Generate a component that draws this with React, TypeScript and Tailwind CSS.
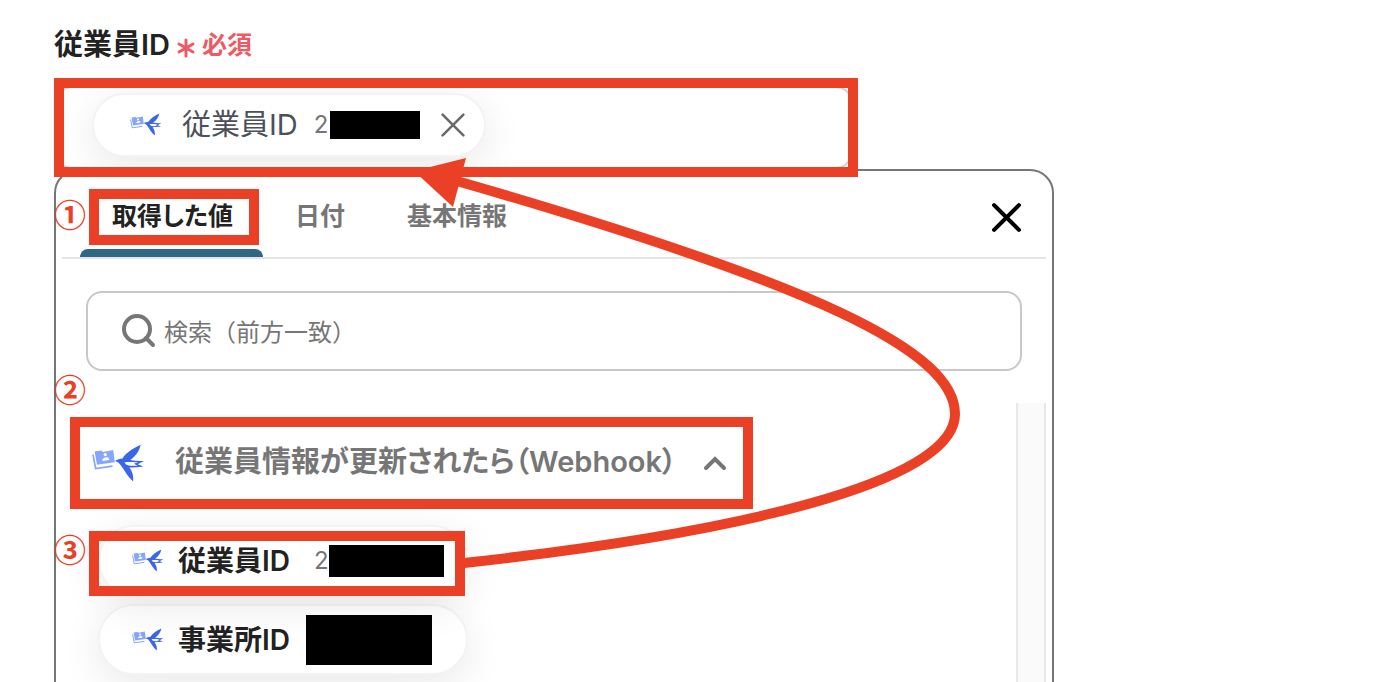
import React, { useState } from 'react'
import clsx from 'clsx'

const TABS = ['取得した値', '日付', '基本情報']

const BirdIcon: React.FC<{ className?: string }> = ({ className }) => (
  <svg viewBox="0 0 160 116" className={className} aria-hidden="true">
    <path d="M3 32 L11 74 L62 67" fill="none" stroke="#85a6fb" strokeWidth="5" />
    <path d="M8 23 L28 20 L33 24 L64 18 L69 55 L15 63 Z" fill="#85a6fb" />
    <circle cx="40" cy="32" r="5" fill="#fff" />
    <path d="M31 49 C31 39 50 36 52 45 L52 48 L32 51 Z" fill="#fff" />
    <path
      d="M147 2 C122 14 102 26 92 44 C83 45 77 47 69 51 C78 54 82 57 85 62 C92 70 96 78 102 87 C108 97 115 105 124 113 C126 98 123 84 113 71 C128 71 140 71 155 68 L138 61 L157 51 C142 52 128 51 115 48 C131 38 143 21 147 2 Z"
      fill="#3a66ea"
    />
    <path d="M98 56 C110 53 124 56 140 55 L126 60 L138 65 C124 66 110 67 102 61 Z" fill="#fff" />
  </svg>
)

const CrossIcon: React.FC<{ className?: string; strokeWidth: number }> = ({ className, strokeWidth }) => (
  <svg viewBox="0 0 30 30" className={className} aria-hidden="true">
    <path
      d="M3 3 L27 27 M27 3 L3 27"
      stroke="currentColor"
      strokeWidth={strokeWidth}
      strokeLinecap="round"
      fill="none"
    />
  </svg>
)

const Frame: React.FC<{ className: string }> = ({ className }) => (
  <span className={clsx('pointer-events-none absolute z-10 border-10 border-[#ea4025]', className)} />
)

const Step: React.FC<{ className: string; children: string }> = ({ className, children }) => (
  <span
    className={clsx(
      "absolute z-10 font-['Noto_Sans_CJK_JP',sans-serif] text-[32px] leading-8 font-bold text-[#ea4025] [font-feature-settings:normal]",
      className,
    )}
  >
    {children}
  </span>
)

export default function App() {
  const [tab, setTab] = useState(TABS[0])
  const [open, setOpen] = useState(true)
  const [keyword, setKeyword] = useState('')

  return (
    <main className="h-screen overflow-hidden bg-white font-['Inter','Noto_Sans_CJK_JP',sans-serif] text-[#222] [font-feature-settings:'palt']">
      <div className="relative ml-[54px] max-w-[1000px] pt-6">
        <div className="flex h-10 items-center gap-1.5 pt-0.5 text-[29px] font-semibold">
          従業員ID
          <span className="flex items-center gap-1.5 pt-0.5 text-[25px] text-[#ee5a63]">
            <svg viewBox="0 0 20 20" className="mt-1 size-5" aria-hidden="true">
              <path
                d="M10 2 V18 M3 6 L17 14 M17 6 L3 14"
                stroke="currentColor"
                strokeWidth="3"
                strokeLinecap="round"
              />
            </svg>
            必須
          </span>
        </div>

        <div className="relative mt-[22px] w-4/5">
          <div className="mr-0.5 ml-0.5 flex h-[83px] items-center overflow-hidden rounded-2xl border-2 border-[#ccd0d5] pl-[34px]">
            <div className="mb-1.5 flex h-16 items-center rounded-full border-2 border-[#f3f3f3] bg-white pr-[18px] pl-9 shadow-[0_10px_40px_rgba(0,0,0,0.09)]">
              <BirdIcon className="w-8" />
              <span className="ml-5 text-[29px] text-[#4b5059]">従業員ID</span>
              <span className="mr-0.5 ml-4 text-2xl text-[#767676]">2</span>
              <span className="h-7 w-[90px] bg-black" />
              <button type="button" aria-label="削除" className="ml-5 text-[#6b6b6b]">
                <CrossIcon className="size-[26px]" strokeWidth={3} />
              </button>
            </div>
          </div>
          <Frame className="-top-2 right-[-4px] -bottom-2 left-0" />
        </div>

        <section className="relative h-[560px] rounded-3xl border-2 border-[#767676] bg-white px-1.5 pt-1.5">
          <Step className="top-[26px] -left-0.5">①</Step>
          <Step className="top-[201px] -left-0.5">②</Step>
          <Step className="top-[361px] -left-0.5">③</Step>

          <div className="flex items-center justify-between border-b-2 border-[#e5e5e5] px-[18px]">
            <div role="tablist" className="flex">
              {TABS.map((name) => (
                <button
                  key={name}
                  type="button"
                  role="tab"
                  aria-selected={tab === name}
                  onClick={() => setTab(name)}
                  className={clsx(
                    'relative h-20 pr-[30px] pl-8 text-[25px] font-semibold',
                    tab === name ? 'text-[#222]' : 'text-[#767676]',
                  )}
                >
                  {name}
                  {tab === name && (
                    <>
                      <span className="absolute inset-x-0 bottom-0 h-2 rounded-t-lg bg-[#2e6883]" />
                      <Frame className="top-3 right-1 bottom-3 left-[9px]" />
                    </>
                  )}
                </button>
              ))}
            </div>
            <button type="button" aria-label="閉じる" className="flex size-11 items-center justify-center text-black">
              <CrossIcon className="size-[31px]" strokeWidth={4} />
            </button>
          </div>

          <label className="mx-6 mt-8 flex h-20 items-center gap-1.5 rounded-2xl border-2 border-[#c8c8c8] pr-8 pl-[34px]">
            <svg viewBox="0 0 36 36" className="size-9 shrink-0 text-[#767676]" aria-hidden="true">
              <circle cx="15" cy="16" r="13" fill="none" stroke="currentColor" strokeWidth="4" />
              <path d="M24 25 L31 32" stroke="currentColor" strokeWidth="4" strokeLinecap="round" />
            </svg>
            <input
              type="text"
              aria-label="検索"
              value={keyword}
              onChange={(e) => setKeyword(e.target.value)}
              placeholder="検索（前方一致）"
              className="w-full pt-1 text-2xl outline-none [font-feature-settings:normal] placeholder:text-[#767676]"
            />
          </label>

          <div className="mt-8 flex h-[340px] overflow-hidden">
            <div className="flex-1 pt-3.5 pl-2">
              <button
                type="button"
                aria-expanded={open}
                onClick={() => setOpen(!open)}
                className="relative flex h-[92px] items-center pr-[25px] pl-[22px] text-[29px] font-semibold text-[#767676]"
              >
                <BirdIcon className="w-[53px]" />
                <span className="ml-[30px] pb-0.5">従業員情報が更新されたら（Webhook）</span>
                <svg viewBox="0 0 26 16" className="ml-[26px] w-[26px]" aria-hidden="true">
                  <path
                    d="M4 13 L13 4 L22 13"
                    fill="none"
                    stroke="currentColor"
                    strokeWidth="4"
                    strokeLinecap="round"
                  />
                </svg>
                <Frame className="inset-0" />
              </button>

              {open && (
                <div className="mt-4 flex flex-col items-start gap-2 pl-7">
                  <button
                    type="button"
                    className="relative flex h-[71px] w-[370px] items-center rounded-full border-2 border-[#f3f3f3] bg-white pl-8 shadow-[0_10px_40px_rgba(0,0,0,0.09)]"
                  >
                    <BirdIcon className="w-8" />
                    <span className="ml-3.5 text-[28px] font-semibold">従業員ID</span>
                    <span className="ml-6 text-2xl text-[#767676]">2</span>
                    <span className="h-8 w-[115px] bg-black" />
                    <Frame className="top-1 right-px bottom-[-2px] -left-[11px]" />
                  </button>
                  <button
                    type="button"
                    className="flex h-[71px] w-[370px] items-center rounded-full border-2 border-[#f3f3f3] bg-white pl-8 shadow-[0_10px_40px_rgba(0,0,0,0.09)]"
                  >
                    <BirdIcon className="w-8" />
                    <span className="ml-3.5 text-[28px] font-semibold">事業所ID</span>
                    <span className="ml-4 h-[50px] w-[126px] bg-black" />
                  </button>
                </div>
              )}
            </div>
            <div className="w-[30px] border-x-2 border-[#e8e8e8] bg-[#fafafa]" />
          </div>
        </section>

        {/* 選択した値が入力欄に入る流れ */}
        <svg
          viewBox="0 0 1000 682"
          className="pointer-events-none absolute top-0 left-0 z-20 h-[682px] w-[1000px]"
          aria-hidden="true"
        >
          <path
            d="M410 563 C726 528 901 475 901 414 C901 352 766 285 396 179"
            fill="none"
            stroke="#ea4025"
            strokeWidth="10"
          />
          <path d="M360 171 L412 158 L399 207 Z" fill="#ea4025" />
        </svg>
      </div>
    </main>
  )
}
